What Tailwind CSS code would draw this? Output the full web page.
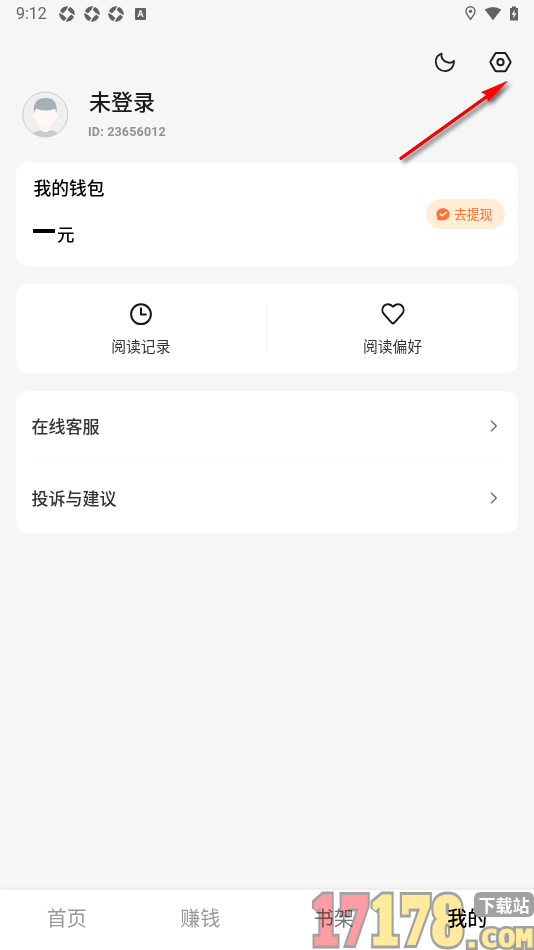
<!DOCTYPE html>
<html lang="zh-CN">
<head>
<meta charset="utf-8">
<title>我的</title>
<script src="https://cdn.jsdelivr.net/npm/@tailwindcss/browser@4"></script>
</head>
<body class="bg-[#f6f6f6] font-['Noto_Sans_CJK_SC',sans-serif] text-[#1b1b1b]">
<svg class="hidden">
  <symbol id="swirl" viewBox="0 0 16 16">
    <g fill="#626262"><path id="blade" d="M1 5.200C2.400 1.800 5.500 0 9.300.3L6.800 4.400 3.800 7.500Z"/><use href="#blade" transform="rotate(90 8 8)"/><use href="#blade" transform="rotate(180 8 8)"/><use href="#blade" transform="rotate(270 8 8)"/></g>
  </symbol>
</svg>
<div class="relative flex flex-col w-[534px] h-[950px] overflow-hidden">
  <header class="h-7 flex items-center justify-between pl-[16px] pr-[16px] shrink-0">
    <div class="flex items-center">
      <span class="w-[43px] font-[Roboto] text-[16px] leading-7 text-[#666]">9:12</span>
      <div class="flex gap-[8.5px]">
        <svg class="w-4 h-4"><use href="#swirl"/></svg>
        <svg class="w-4 h-4"><use href="#swirl"/></svg>
        <svg class="w-4 h-4"><use href="#swirl"/></svg>
      </div>
      <span class="ml-[11px] w-[11px] h-3 rounded-[1px] bg-[#626262] text-[#f5f5f5] font-[Roboto] font-bold text-[9px] leading-3 text-center">A</span>
    </div>
    <div class="flex items-center -mt-[2px]">
      <svg class="w-[11px] h-[15px]" viewBox="0 0 11 15" fill="none" stroke="#666" stroke-width="1.4"><path d="M5.5 13.3C3.2 10.4 1 7.8 1 5.3a4.5 4.5 0 0 1 9 0c0 2.5-2.2 5.1-4.5 8Z"/><circle cx="5.5" cy="5.3" r="1.7" fill="#666" stroke="none"/></svg>
      <svg class="ml-[8px] w-[18px] h-[15px]" viewBox="0 0 18 15"><path d="M.7 3.5Q9-1.7 17.3 3.5L9 14.3Z" fill="#626262"/></svg>
      <svg class="ml-[7px] -mr-[1px] w-[10px] h-[15px]" viewBox="0 0 10 15"><path d="M1 2h2V.5h4V2h2v12.5H1Z" fill="#626262"/><path d="M5.8 3.5 2.6 8.7h2l-.4 4L7.4 7.3h-2Z" fill="#f5f5f5"/></svg>
    </div>
  </header>

  <section class="h-[134px] shrink-0 flex flex-col">
    <div class="h-[62px] pt-[22px] flex justify-end gap-[31px] pr-[21px]">
      <svg class="w-6 h-6" viewBox="0 0 24 24" fill="none" stroke="#1f1f1f" stroke-width="1.800" stroke-linejoin="round"><path d="M8.600 3.700C4.800 5 2.600 8.400 2.800 12.300 3 17.300 7 21.200 12 21.200 17 21.200 21 17.200 21 11 19 12.700 16.500 13.200 14 12.200 10 10.900 7.800 7.900 8.600 3.700Z"/></svg>
      <svg class="w-[25px] h-6" viewBox="0 0 25 24" fill="none" stroke="#1f1f1f" stroke-width="2" stroke-linejoin="round"><path d="M8.500 3Q7.500 3 7 3.900L2.700 11.200Q2.200 12.100 2.700 13L7 20.400Q7.500 21.300 8.500 21.300H16.500Q17.500 21.300 18 20.400L22.300 13Q22.800 12.100 22.300 11.200L18 3.900Q17.500 3 16.500 3Z"/><circle cx="12.500" cy="12.200" r="3.100"/></svg>
    </div>
    <div class="flex pl-[22px] gap-[20px]">
      <svg class="w-[47px] h-[48px]" viewBox="0 0 47 48">
        <defs><clipPath id="face"><circle cx="23.300" cy="24.500" r="22.400"/></clipPath></defs>
        <circle cx="23.300" cy="24.500" r="22.500" fill="#efefef" stroke="#c6cdd0"/>
        <g clip-path="url(#face)"><path d="M8 48Q11 41 18 40.500H29Q36 41 39 48Z" fill="#c5cdd1"/><path d="M18.500 33V39.500Q23.500 45 28 39.500V33Z" fill="#fff6f2"/><path d="M12.500 18Q23 13 34 18V23.500Q36.500 23.500 35.300 27L33.500 28.500C32 33 27.500 37 23.300 37S14.500 33 13 28.500L11.200 27Q10 23.500 12.500 23.500Z" fill="#fff8f4"/><path d="M12 23C11 12.500 15 8 23.500 8S35.500 12.500 34.500 23L33 18.700Q23.500 22.500 14 18.700Z" fill="#a4b0b7"/></g>
      </svg>
      <div class="flex flex-col -mt-[3px]">
        <h1 class="text-[22px] leading-[26px] font-medium">未登录</h1>
        <p class="mt-[12px] -ml-px font-[Roboto] text-[12.500px] leading-[14px] font-bold tracking-[0.180px] text-[#929292]">ID: 23656012</p>
      </div>
    </div>
  </section>

  <main class="pl-[15.500px] pr-4 flex flex-col gap-[18px] grow">
    <section class="h-[104px] rounded-xl bg-white flex items-center justify-between pl-[18px] pr-[13px]">
      <div class="h-full pt-[12px] text-black font-medium">
        <h2 class="text-[17.800px] leading-[26px]">我的钱包</h2>
        <div class="mt-[20px] -ml-[0.500px] flex items-center text-[17.500px] leading-[28px]"><span class="w-[22px] h-1 bg-black mr-[2px] -mt-[6px]"></span>元</div>
      </div>
      <button class="w-[79px] h-[30px] rounded-full bg-[#ffedd5] text-[#ff7434] flex items-center pl-[10px] text-[12.800px]">
        <svg class="w-[14px] h-[13px] mr-[4px]" viewBox="0 0 14 13"><path d="M7 .3C10.800.3 13.500 2.800 13.500 6.200S10.800 12.200 7 12.200H1.300V9.500C-1.200 4.800 1.800.3 7 .3Z" fill="#ff7434"/><path d="m3.500 6 2.700 1.700 4.500-3.500" fill="none" stroke="#fff2e4" stroke-width="1.500"/></svg>去提现
      </button>
    </section>

    <section class="h-[89px] rounded-xl bg-white flex items-center">
      <div class="flex-1 h-full flex flex-col items-center pt-[18px] text-[14.800px] text-[#333]">
        <svg class="w-6 h-6" viewBox="0 0 24 24" fill="none" stroke="#171717" stroke-width="2"><circle cx="12" cy="12.200" r="9.900"/><path d="M12 6.200V12.500H16.800" stroke-linecap="round" stroke-linejoin="round"/></svg>
        <span class="mt-[9px] leading-[22px]">阅读记录</span>
      </div>
      <div class="w-px h-12 bg-[#f5f5f5]"></div>
      <div class="flex-1 h-full flex flex-col items-center pt-[18px] text-[14.800px] text-[#333]">
        <svg class="w-6 h-6" viewBox="0 0 24 24" fill="none" stroke="#171717" stroke-width="2" stroke-linejoin="round"><path d="M12 4.700C9.200 1.600 5.400 1.400 3.100 3.700.7 6.200.9 9.900 3.200 12.300L10.800 20.800Q12 22 13.200 20.800L20.800 12.300C23.100 9.900 23.300 6.200 20.900 3.700 18.600 1.400 14.800 1.600 12 4.700Z"/></svg>
        <span class="mt-[9px] leading-[22px]">阅读偏好</span>
      </div>
    </section>

    <section class="h-[142px] rounded-xl bg-white pl-4 pr-[14px] text-[17px] font-medium text-[#333]">
      <div class="h-[72px] pb-[2px] border-b border-[#f5f5f5] flex items-center justify-between"><span>在线客服</span><svg class="w-2 h-3 mr-[6px]" viewBox="0 0 8 12" fill="none" stroke="#666" stroke-width="1.300"><path d="m1 .7 5.300 5.300L1 11.300"/></svg></div>
      <div class="h-[70px] flex items-center justify-between"><span>投诉与建议</span><svg class="w-2 h-3 mr-[6px]" viewBox="0 0 8 12" fill="none" stroke="#666" stroke-width="1.300"><path d="m1 .7 5.300 5.300L1 11.300"/></svg></div>
    </section>
  </main>

  <nav class="h-[61px] shrink-0 bg-white border-t border-[#f0f0f0] grid grid-cols-4 text-center text-[20px] leading-[56px] text-[#999] shadow-[0_-1px_3px_rgba(0,0,0,0.05)]">
    <span>首页</span><span>赚钱</span><span class="text-[#777]">书架</span><span class="text-black font-medium">我的</span>
  </nav>

  <svg class="absolute left-[390px] top-[70px]" width="130" height="100" viewBox="390 70 130 100">
    <defs><filter id="shade" x="-20%" y="-20%" width="150%" height="150%"><feDropShadow dx="3" dy="3" stdDeviation="2" flood-color="#000" flood-opacity=".6"/></filter></defs>
    <g filter="url(#shade)" fill="#f00"><path d="M401 158.300 489 95" stroke="#b70000" stroke-width="3.200" stroke-linecap="round"/><path d="M401 158.300 489 95" stroke="#f00" stroke-width="2.400" stroke-linecap="round"/><path d="M507 81.500 481.700 92.300 486.500 94.800 488.300 101.300Z" stroke="#f00" stroke-width=".8"/></g>
  </svg>

  <svg class="absolute left-[306px] top-[884px] mix-blend-multiply" width="228" height="66" viewBox="306 884 228 66">
    <defs>
      <g id="digits-a" font-family="DejaVu Serif" font-weight="bold" font-size="62"><text x="310.500" y="942.500" textLength="59" lengthAdjust="spacingAndGlyphs">17</text></g>
      <g id="digits-b" font-family="DejaVu Serif" font-weight="bold" font-size="62"><text x="369" y="942.500" textLength="94" lengthAdjust="spacingAndGlyphs">178</text></g>
      <g id="domain" font-family="DejaVu Sans Mono" font-weight="bold" font-size="24"><text x="463" y="947" textLength="70" lengthAdjust="spacingAndGlyphs">.COM</text></g>
    </defs>
    <g fill="#a2a2a2" stroke="#a2a2a2" stroke-linejoin="miter" stroke-miterlimit="2"><use href="#digits-a" stroke-width="11"/><use href="#digits-b" stroke-width="11"/><use href="#domain" stroke-width="6"/></g>
    <g stroke-linejoin="miter" stroke-miterlimit="2"><use href="#digits-a" fill="#ff9ca4" stroke="#ff9ca4" stroke-width="5"/>
    <use href="#digits-b" fill="#ffeb9b" stroke="#ffeb9b" stroke-width="5"/>
    <use href="#domain" fill="#ffeb9b" stroke="#ffeb9b" stroke-width="1"/></g>
  </svg>
  <div class="absolute left-[474px] top-[892px] w-[60px] h-[25px] rounded-[6px] bg-[#a2a2a2] text-white text-[17px] leading-[25px] font-bold text-center">下载站</div>
</div>
</body>
</html>
